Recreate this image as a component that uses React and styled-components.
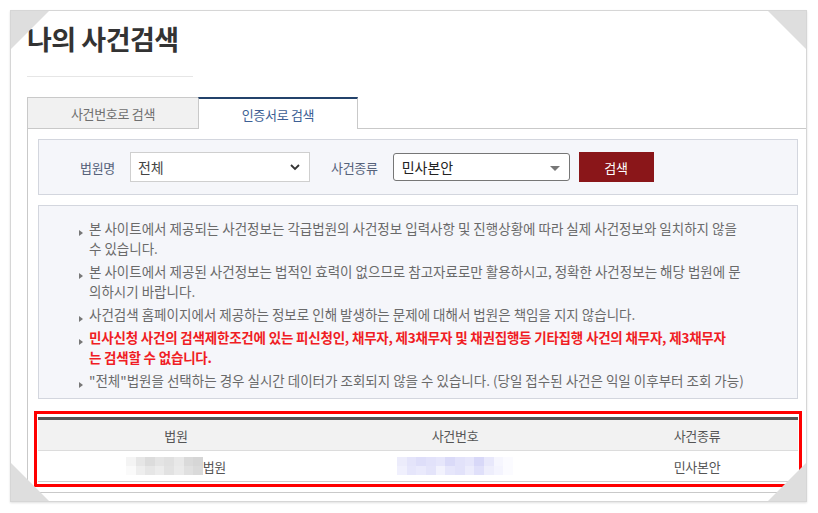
import React from "react";
import styled, { createGlobalStyle, css } from "styled-components";

const GlobalStyle = createGlobalStyle`
  html, body { margin: 0; padding: 0; background: #fff; }
  body { font-family: "Noto Sans CJK KR", "Noto Sans", sans-serif; }
  * { box-sizing: border-box; }
`;

const Frame = styled.div`
  position: relative;
  margin: 10px;
  width: 797px;
  height: 492px;
  border: 1px solid #d6d6d6;
  box-shadow: 0 1px 2px rgba(0, 0, 0, 0.12);
  padding-left: 16px;
  display: flex;
  flex-direction: column;
  overflow: hidden;
  background: #fff;
`;

const cornerPos = {
  tl: css`top: -1px; left: -1px; border-top: 40px solid #dedede; border-right: 40px solid transparent;`,
  tr: css`top: -1px; right: -1px; border-top: 40px solid #dedede; border-left: 40px solid transparent;`,
  bl: css`bottom: -1px; left: -1px; border-bottom: 40px solid #dedede; border-right: 40px solid transparent;`,
  br: css`bottom: -1px; right: -1px; border-bottom: 40px solid #dedede; border-left: 40px solid transparent;`,
};

const Corner = styled.span`
  position: absolute;
  width: 0;
  height: 0;
  z-index: 5;
  ${(p) => cornerPos[p.$pos]}
`;

const Title = styled.h1`
  margin: 10px 0 0;
  font-size: 27px;
  line-height: 36px;
  font-weight: 700;
  color: #333;
  letter-spacing: -0.5px;
`;

const Divider = styled.div`
  width: 166px;
  height: 1px;
  background: #e6e6e6;
  margin-top: 19px;
`;

const TabBar = styled.div`
  display: flex;
  margin-top: 20px;
  position: relative;
  z-index: 1;
`;

const Tab = styled.div`
  height: 32px;
  margin-bottom: -1px;
  display: flex;
  align-items: center;
  justify-content: center;
  font-size: 13px;
  letter-spacing: -0.3px;
  border: 1px solid #c9c9c9;
  ${(p) =>
    p.$active
      ? css`
          width: 160px;
          margin-left: -1px;
          background: #fff;
          color: #3d5f94;
          border-top: 2px solid #23426b;
          border-bottom: none;
        `
      : css`
          width: 172px;
          background: #f1f1f1;
          color: #6f6f6f;
          border-bottom: 1px solid #c9c9c9;
        `}
`;

const Panel = styled.div`
  border-top: 1px solid #c9c9c9;
  border-left: 1px solid #c9c9c9;
  border-bottom: 1px solid #c9c9c9;
  padding: 10px 8px 5px 10px;
  display: flex;
  flex-direction: column;
`;

const SearchBox = styled.div`
  height: 56px;
  background: #f5f6fa;
  border: 1px solid #d3d6de;
  display: flex;
  align-items: center;
  padding-left: 41px;
`;

const Label = styled.span`
  font-size: 13px;
  color: #56627a;
  margin-right: ${(p) => p.$gap}px;
  letter-spacing: -0.3px;
`;

const Select = styled.div`
  position: relative;
  display: flex;
  align-items: center;
  background: #fff;
  font-size: 14px;
  ${(p) =>
    p.$native
      ? css`
          width: 177px;
          height: 28px;
          border: 1px solid #767676;
          border-radius: 3px;
          padding-left: 8px;
          color: #222;
        `
      : css`
          width: 180px;
          height: 30px;
          border: 1px solid #cfcfcf;
          padding-left: 7px;
          color: #444;
        `}
  margin-right: ${(p) => p.$mr}px;
`;

const Chevron = styled.svg`
  position: absolute;
  right: 8px;
  top: 50%;
  transform: translateY(-50%);
`;

const Caret = styled.span`
  position: absolute;
  right: 9px;
  top: 12px;
  width: 0;
  height: 0;
  border-left: 5px solid transparent;
  border-right: 5px solid transparent;
  border-top: 5px solid #777;
`;

const Button = styled.button`
  width: 75px;
  height: 30px;
  border: none;
  background: #8a1619;
  color: #fff;
  font-family: inherit;
  font-size: 13px;
  padding: 0;
`;

const Notice = styled.ul`
  margin: 10px 0 0;
  list-style: none;
  background: #f5f6fa;
  border: 1px solid #d3d6de;
  padding: 12px 0 8px 40px;
  height: 194px;
`;

const Item = styled.li`
  position: relative;
  padding-left: 10px;
  margin-bottom: 3px;
  font-size: 13.5px;
  line-height: 20px;
  color: ${(p) => (p.$warn ? "#f01d24" : "#6a6a6a")};
  font-weight: ${(p) => (p.$warn ? 700 : 400)};
  letter-spacing: ${(p) => (p.$warn ? "-0.2px" : "0")};
  white-space: nowrap;
  &::before {
    content: "";
    position: absolute;
    left: 0;
    top: 12px;
    border-top: 3px solid transparent;
    border-bottom: 3px solid transparent;
    border-left: 4px solid #777;
  }
`;

const Line = styled.span`
  display: block;
`;

const Highlight = styled.div`
  margin: 12px -4px 0;
  border: 3px solid #ff0000;
  padding: 3px 1px 2px;
`;

const Table = styled.div`
  border-top: 3px solid #555;
`;

const Row = styled.div`
  display: grid;
  grid-template-columns: 276px 282px 1fr;
  align-items: center;
  height: 31px;
  background: ${(p) => (p.$head ? "#f2f2f2" : "#fff")};
  border-bottom: 1px solid ${(p) => (p.$head ? "#dcdcdc" : "#cfcfcf")};
`;

const Cell = styled.div`
  display: flex;
  align-items: center;
  justify-content: center;
  font-size: 13px;
  color: #555;
  letter-spacing: -0.3px;
`;

const Mosaic = styled.span`
  display: inline-grid;
  grid-template-columns: repeat(${(p) => p.$cols}, ${(p) => p.$cell}px);
  grid-auto-rows: 9px;
`;

const Px = styled.span`
  background: ${(p) => p.$c};
`;

function Blur({ colors, cols, cell }) {
  return (
    <Mosaic $cols={cols} $cell={cell}>
      {colors.map((c, i) => (
        <Px key={i} $c={c} />
      ))}
    </Mosaic>
  );
}

const courtColors = [
  "#f4f4f4", "#e6e6e6", "#dcdcdc", "#e4e4e4", "#e0e0e0", "#e8e8e8", "#dadada", "#d6d6d6",
  "#fafafa", "#eeeeee", "#e6e6e6", "#ececec", "#e2e2e2", "#eaeaea", "#e0e0e0", "#dadada",
];

const caseColors = [
  "#ececfb", "#e4e4fa", "#dedef9", "#e2e2fa", "#e6e6fb", "#dadaf8", "#e2e2fa", "#e6e6fb", "#d8d8f8", "#e8e8fb", "#f6f6fe", "#fbfbff",
  "#f0f0fd", "#e6e6fb", "#eaeafc", "#e4e4fa", "#f2f2fd", "#e6e6fb", "#e2e2fa", "#ececfc", "#e0e0fa", "#eeeefc", "#f4f4fe", "#fbfbff",
];

export default function App() {
  return (
    <>
      <GlobalStyle />
      <Frame>
        <Corner $pos="tl" />
        <Corner $pos="tr" />
        <Corner $pos="bl" />
        <Corner $pos="br" />
        <Title>나의 사건검색</Title>
        <Divider />
        <TabBar>
          <Tab>사건번호로 검색</Tab>
          <Tab $active>인증서로 검색</Tab>
        </TabBar>
        <Panel>
          <SearchBox>
            <Label $gap={15}>법원명</Label>
            <Select $mr={21}>
              전체
              <Chevron width="12" height="8" viewBox="0 0 12 8">
                <path d="M2 2 L6 6 L10 2" fill="none" stroke="#333" strokeWidth="1.8" />
              </Chevron>
            </Select>
            <Label $gap={15}>사건종류</Label>
            <Select $native $mr={9}>
              민사본안
              <Caret />
            </Select>
            <Button>검색</Button>
          </SearchBox>
          <Notice>
            <Item>
              <Line>본 사이트에서 제공되는 사건정보는 각급법원의 사건정보 입력사항 및 진행상황에 따라 실제 사건정보와 일치하지 않을</Line>
              <Line>수 있습니다.</Line>
            </Item>
            <Item>
              <Line>본 사이트에서 제공된 사건정보는 법적인 효력이 없으므로 참고자료로만 활용하시고, 정확한 사건정보는 해당 법원에 문</Line>
              <Line>의하시기 바랍니다.</Line>
            </Item>
            <Item>
              <Line>사건검색 홈페이지에서 제공하는 정보로 인해 발생하는 문제에 대해서 법원은 책임을 지지 않습니다.</Line>
            </Item>
            <Item $warn>
              <Line>민사신청 사건의 검색제한조건에 있는 피신청인, 채무자, 제3채무자 및 채권집행등 기타집행 사건의 채무자, 제3채무자</Line>
              <Line>는 검색할 수 없습니다.</Line>
            </Item>
            <Item>
              <Line>"전체"법원을 선택하는 경우 실시간 데이터가 조회되지 않을 수 있습니다. (당일 접수된 사건은 익일 이후부터 조회 가능)</Line>
            </Item>
          </Notice>
          <Highlight>
            <Table>
              <Row $head>
                <Cell>법원</Cell>
                <Cell>사건번호</Cell>
                <Cell>사건종류</Cell>
              </Row>
              <Row>
                <Cell>
                  <Blur colors={courtColors} cols={8} cell={9.6} />
                  법원
                </Cell>
                <Cell>
                  <Blur colors={caseColors} cols={12} cell={9.7} />
                </Cell>
                <Cell>민사본안</Cell>
              </Row>
            </Table>
          </Highlight>
        </Panel>
      </Frame>
    </>
  );
}
